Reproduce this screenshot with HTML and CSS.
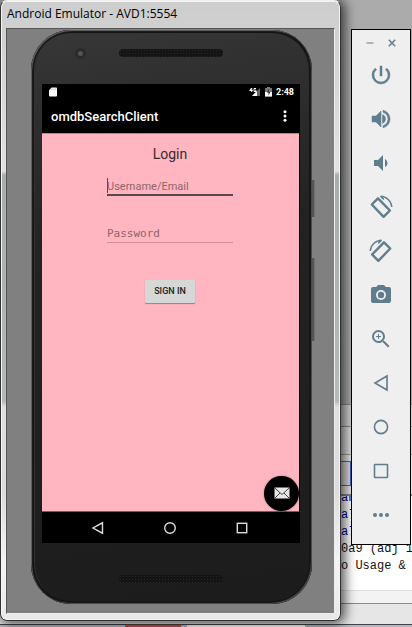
FILE: index.html
```html
<!DOCTYPE html>
<html lang="en">
<head>
<meta charset="utf-8">
<meta name="viewport" content="width=device-width, initial-scale=1">
<title>Android Emulator - AVD1:5554</title>
<link rel="stylesheet" href="styles.css">
</head>
<body>
<div class="ide" aria-hidden="true">
  <div class="ide-empty"></div>
  <div class="ide-bar ide-bar-top"></div>
  <div class="ide-bar"></div>
  <div class="ide-tools"><span class="ide-box"></span></div>
  <div class="console">
    <pre class="log"><span class="trace">an
al
al</span>
0a9 (adj 1
o Usage &amp;</pre>
  </div>
  <div class="ide-strip"></div>
  <div class="ide-footer"></div>
  <div class="taskbar"><span class="task-red"></span><span class="task-white"></span></div>
</div>

<div class="workspace">
  <main class="window">
    <header class="titlebar">Android Emulator - AVD1:5554</header>
    <div class="stage">
      <div class="phone">
        <span class="side-key power-key"></span>
        <span class="side-key volume-key"></span>
        <div class="phone-top">
          <span class="camera"></span>
          <span class="speaker"></span>
        </div>
        <div class="screen">
          <div class="statusbar">
            <svg class="sd" viewBox="0 0 9 10"><path d="M3 0h5a1 1 0 0 1 1 1v8a1 1 0 0 1-1 1H1a1 1 0 0 1-1-1V3z" fill="#fff"/><path d="M3.500 1v2M5.500 1v2M7.500 1v2" stroke="#999" stroke-width=".7"/></svg>
            <svg class="signal" viewBox="0 0 12 10"><path d="M11 1v8H3z" fill="#666"/><path d="M8 4v5H3z" fill="#fff"/><path d="M2.500 1L.7 3.500h3M2.700 1v4M7 1.500H5v3h2V3.200H6" fill="none" stroke="#fff" stroke-width="1"/></svg>
            <svg class="battery" viewBox="0 0 7 10"><path d="M2 0h3v1h2v8.500H0V1h2z" fill="#777"/><path d="M0 5h7v4.500H0z" fill="#fff"/><path d="M3.800 2L2 5.600h1.500V8.500L5.300 5H3.800z" fill="#222"/></svg>
            <time class="clock">2:48</time>
          </div>
          <div class="appbar">
            <h1 class="app-title">omdbSearchClient</h1>
            <button class="icon-button overflow" type="button" aria-label="More options"><svg viewBox="0 0 4 12"><g fill="#fff"><circle cx="2" cy="1.700" r="1.500"/><circle cx="2" cy="6" r="1.500"/><circle cx="2" cy="10.300" r="1.500"/></g></svg></button>
          </div>
          <form class="login">
            <h2 class="login-title">Login</h2>
            <input class="field field-active" type="text" placeholder="Username/Email" aria-label="Username/Email">
            <input class="field field-password" type="password" placeholder="Password" aria-label="Password">
            <button class="signin" type="button">SIGN IN</button>
            <button class="icon-button fab" type="button" aria-label="Send mail"><svg viewBox="0 0 16 12"><rect x=".5" y=".5" width="15" height="11" rx=".6" fill="#e6e6e6"/><path d="M.8 1L8 7.500 15.200 1M1 11l5-5M15 11l-5-5" fill="none" stroke="#444" stroke-width="1"/></svg></button>
          </form>
          <nav class="navbar">
            <button class="icon-button nav" type="button" aria-label="Back"><svg viewBox="0 0 14 14"><path d="M11.500 1.800v10.400L2 7z"/></svg></button>
            <button class="icon-button nav" type="button" aria-label="Home"><svg viewBox="0 0 14 14"><circle cx="7" cy="7" r="5.300"/></svg></button>
            <button class="icon-button nav" type="button" aria-label="Recent apps"><svg viewBox="0 0 14 14"><rect x="2.300" y="2.300" width="9.400" height="9.400"/></svg></button>
          </nav>
        </div>
        <div class="phone-bottom"><span class="speaker"></span></div>
      </div>
    </div>
  </main>

  <aside class="toolbar">
    <div class="toolbar-head">
      <button class="icon-button mini" type="button" aria-label="Minimize"><svg viewBox="0 0 8 8"><path d="M.5 4h7" stroke="#9db0b8" stroke-width="1.800"/></svg></button>
      <button class="icon-button mini" type="button" aria-label="Close"><svg viewBox="0 0 8 8"><path d="M.8.8l6.400 6.400M7.200.8L.8 7.200" stroke="#607d8b" stroke-width="1.500"/></svg></button>
    </div>
    <button class="icon-button tool" type="button" aria-label="Power"><svg viewBox="0 0 24 24"><path stroke="#607d8b" stroke-width=".5" d="M13 3h-2v10h2zm4.830 2.170l-1.420 1.420A6.920 6.920 0 0 1 19 12c0 3.870-3.130 7-7 7A6.995 6.995 0 0 1 7.580 6.580L6.170 5.170A8.932 8.932 0 0 0 3 12a9 9 0 0 0 18 0c0-2.740-1.230-5.180-3.170-6.830z"/></svg></button>
    <button class="icon-button tool" type="button" aria-label="Volume up"><svg viewBox="0 0 24 24"><path stroke="#607d8b" stroke-width=".5" d="M3 9v6h4l5 5V4L7 9zm10.500-1.500v9A5 5 0 0 0 16.500 12a5 5 0 0 0-3-4.500zM14 3.230v2.060c2.890.86 5 3.540 5 6.710s-2.110 5.850-5 6.710v2.060c4.010-.91 7-4.490 7-8.770s-2.990-7.860-7-8.770z"/></svg></button>
    <button class="icon-button tool" type="button" aria-label="Volume down"><svg viewBox="0 0 24 24"><path d="M18.500 12A4.500 4.500 0 0 0 16 7.970v8.050c1.480-.73 2.500-2.250 2.500-4.020zM5 9v6h4l5 5V4L9 9z"/></svg></button>
    <button class="icon-button tool" type="button" aria-label="Rotate left"><svg viewBox="0 0 24 24"><path d="M9 3.300L2.800 9.500 14.600 21.800 20.900 15.500z" fill="none" stroke="#607d8b" stroke-width="2.400" stroke-linejoin="round"/><path d="M11.500 1.200A11.500 11.500 0 0 1 22.800 12M11.500 1.200l3.400 3.400" fill="none" stroke="#607d8b" stroke-width="1.400"/></svg></button>
    <button class="icon-button tool" type="button" aria-label="Rotate right"><svg viewBox="0 0 24 24"><path d="M15 3.300l6.200 6.200L9.400 21.800 3.100 15.500z" fill="none" stroke="#607d8b" stroke-width="2.400" stroke-linejoin="round"/><path d="M12.500 1.200A11.500 11.500 0 0 0 1.200 12M12.500 1.200L9.100 4.600" fill="none" stroke="#607d8b" stroke-width="1.400"/></svg></button>
    <button class="icon-button tool" type="button" aria-label="Take screenshot"><svg viewBox="0 0 24 24"><circle cx="12" cy="12" r="3.200"/><path d="M9 2L7.170 4H4a2 2 0 0 0-2 2v12a2 2 0 0 0 2 2h16a2 2 0 0 0 2-2V6a2 2 0 0 0-2-2h-3.170L15 2zm3 15a5 5 0 1 1 0-10 5 5 0 0 1 0 10z"/></svg></button>
    <button class="icon-button tool" type="button" aria-label="Zoom"><svg viewBox="0 0 24 24"><path d="M15.500 14h-.79l-.28-.27A6.471 6.471 0 0 0 16 9.500 6.500 6.500 0 1 0 9.500 16c1.610 0 3.090-.59 4.230-1.570l.27.28v.79l5 4.990L20.490 19zm-6 0a4.500 4.500 0 1 1 0-9 4.500 4.500 0 0 1 0 9zm2.500-4h-2v2H9v-2H7V9h2V7h1v2h2z"/></svg></button>
    <button class="icon-button tool line" type="button" aria-label="Back"><svg viewBox="0 0 24 24"><path d="M18 5v14L6 12z"/></svg></button>
    <button class="icon-button tool line" type="button" aria-label="Home"><svg viewBox="0 0 24 24"><circle cx="12" cy="12" r="6.600"/></svg></button>
    <button class="icon-button tool line" type="button" aria-label="Overview"><svg viewBox="0 0 24 24"><rect x="5.500" y="5.500" width="13" height="13" rx=".5"/></svg></button>
    <button class="icon-button tool" type="button" aria-label="More"><svg viewBox="0 0 24 24"><circle cx="6" cy="12" r="2"/><circle cx="12" cy="12" r="2"/><circle cx="18" cy="12" r="2"/></svg></button>
  </aside>
</div>
</body>
</html>
```
FILE: styles.css
```css
* { box-sizing: border-box; }

body {
  position: relative;
  margin: 0;
  min-height: 100vh;
  overflow: hidden;
  background: #ababab;
  font-family: Roboto, "Liberation Sans", sans-serif;
}

h1, h2, pre { margin: 0; font-weight: 400; }
svg { display: block; width: 100%; height: 100%; }

.icon-button {
  display: block;
  padding: 0;
  border: 0;
  background: none;
}

/* Editor behind the emulator */
.ide {
  position: absolute;
  inset: 0;
  display: flex;
  flex-direction: column;
}
.ide-empty { height: 404px; }
.ide-bar { height: 28px; background: #dedede; border-top: 1px solid #888; }
.ide-bar-top { height: 22px; background: #d2d2d2; }
.ide-tools {
  display: flex;
  justify-content: flex-end;
  height: 42px;
  padding-top: 6px;
  background: #e6e6e6;
  border-top: 1px solid #999;
  border-bottom: 2px solid #888;
}
.ide-box {
  width: 100px;
  height: 25px;
  margin-right: 60px;
  background: #ddd;
  border: 1px solid #666;
  border-right: 2px solid #2c62c4;
}
.console {
  display: flex;
  justify-content: flex-end;
  height: 94px;
  overflow: hidden;
  background: #fff;
}
.log {
  width: 71px;
  margin-top: -6px;
  font: 12px/17px "Liberation Mono", monospace;
  color: #111;
}
.trace { color: #00008b; }
.ide-strip { height: 13px; background: #f3f3f3; border-top: 1px solid #ddd; }
.ide-footer { flex: 1; background: #e6e6e6; border-top: 1px solid #888; }
.taskbar {
  display: flex;
  gap: 6px;
  height: 2px;
  padding-left: 125px;
  background: #b4bac8;
  outline: 1px solid #444;
}
.task-red { width: 56px; background: #d04848; }
.task-white { width: 118px; background: #fff; }

.workspace {
  position: relative;
  display: flex;
  align-items: flex-start;
  gap: 10px;
  padding-right: 1px;
}

/* Emulator window */
.window {
  flex: 1;
  padding: 0 5px 6px;
  border: 1px solid #333;
  border-top-color: #eee;
  border-radius: 7px;
  background: linear-gradient(#cdcdcd 0, #e2e2e2 170px, #a9adad 174px, #b6b9b9 400px, #e0e0e0 406px, #dcdcdc 490px, #f4f4f4 560px, #e9e9ec);
  box-shadow: inset 0 0 0 1px #f4f4f4, 2px 1px 12px 2px #000a;
}
.titlebar {
  height: 27px;
  padding-left: 1px;
  font: 12px/26px "Open Sans", "Noto Sans", sans-serif;
  color: #000;
  white-space: nowrap;
}
.stage {
  padding: 1px 22px 9px 24px;
  border: 1px solid #555;
  border-right-color: #eee;
  border-bottom-color: #eee;
  background: #808080;
}

/* Handset */
.phone {
  position: relative;
  padding: 0 12px 0 11px;
  border-radius: 40px;
  background: linear-gradient(170deg, #373737, #232323 35%, #1c1c1c);
  box-shadow: inset 1px 1px 1px #666, inset -1px -1px 1px #505050, inset 0 0 0 3px #151515, inset 4px 0 1px #333;
}
.side-key {
  position: absolute;
  left: 100%;
  width: 3px;
  background: #555;
  border-right: 1px solid #707070;
}
.power-key { top: 150px; height: 37px; }
.volume-key { top: 228px; height: 83px; }
.phone-top, .phone-bottom {
  display: grid;
  grid-template-columns: 1fr 104px 1fr;
  align-items: center;
}
.phone-top { height: 54px; padding-bottom: 8px; }
.phone-bottom { height: 61px; padding-top: 12px; }
.camera {
  justify-self: center;
  width: 11px;
  height: 11px;
  border: 3px solid #2b2b2b;
  border-radius: 50%;
  background: #59505e;
}
.speaker {
  grid-column: 2;
  height: 8px;
  border-radius: 4px;
  background: radial-gradient(#262626 0 1px, #141414 1px) 0 0 / 3px 3px;
}
.phone-bottom .speaker { align-self: start; margin-top: 20px; }

.screen { border-right: 1px solid #000; background: #000; }
.statusbar {
  display: flex;
  align-items: center;
  height: 15px;
  padding: 0 5px 0 7px;
}
.sd { width: 8px; height: 10px; margin-right: auto; }
.signal { width: 12px; height: 10px; }
.battery { width: 7px; height: 10px; margin: 0 4px 0 4px; }
.clock { font-size: 9px; font-weight: 700; color: #fff; }
.appbar {
  display: flex;
  align-items: center;
  justify-content: space-between;
  height: 34px;
  padding: 0 12px 0 9px;
}
.app-title { font-size: 13px; font-weight: 500; color: #fff; }
.overflow { width: 4px; height: 12px; }

.login {
  position: relative;
  display: flex;
  flex-direction: column;
  align-items: center;
  height: 379px;
  padding: 11px 1px 0 0;
  background: #ffb6c1;
  border-top: 1px solid #b8838b;
  border-bottom: 1px solid #7c5960;
}
.login-title { font-size: 14px; line-height: 18px; color: #3a2a2c; }
.field {
  width: 126px;
  height: 18px;
  margin-top: 15px;
  padding: 0;
  border: 0;
  border-bottom: 1px solid #cc929a;
  border-radius: 0;
  outline: 0;
  background: none;
  font: 11px/16px Roboto, sans-serif;
  color: #333;
}
.field::placeholder { color: #8e656b; opacity: 1; }
.field-active {
  border-bottom: 2px solid #59474b;
  background: linear-gradient(#59474b, #59474b) 0 0 / 1px 15px no-repeat;
}
.field-password {
  margin-top: 29px;
  font: 11px/16px "DejaVu Sans Mono", monospace;
}
.signin {
  width: 50px;
  height: 23px;
  margin-top: 37px;
  padding: 0;
  border: 0;
  border-radius: 1px;
  background: #d6d7d7;
  box-shadow: 0 1px 1px #0005;
  font: 500 9px/23px Roboto, sans-serif;
  color: #222;
}
.fab {
  position: absolute;
  right: 0;
  bottom: 0;
  width: 35px;
  height: 35px;
  padding: 11px 9px 12px 10px;
  border-radius: 50%;
  background: #000;
  box-shadow: 0 0 2px #0006;
}
.navbar {
  display: flex;
  align-items: center;
  justify-content: center;
  gap: 58px;
  height: 31px;
  padding-right: 1px;
}
.nav { width: 14px; height: 14px; }
.nav svg { fill: none; stroke: #ddd; stroke-width: 1.4; }

/* Emulator controls */
.toolbar {
  display: flex;
  flex-direction: column;
  align-items: center;
  gap: 20px;
  width: 60px;
  height: 516px;
  margin-top: 29px;
  border: 1px solid #000;
  background: #efefef;
}
.toolbar-head {
  display: flex;
  gap: 14px;
  height: 13px;
  padding-top: 9px;
}
.toolbar-head .mini { width: 8px; height: 8px; }
.tool { width: 24px; height: 24px; flex: none; }
.tool svg { fill: #607d8b; }
.line svg { fill: none; stroke: #607d8b; stroke-width: 1.6; }
```
